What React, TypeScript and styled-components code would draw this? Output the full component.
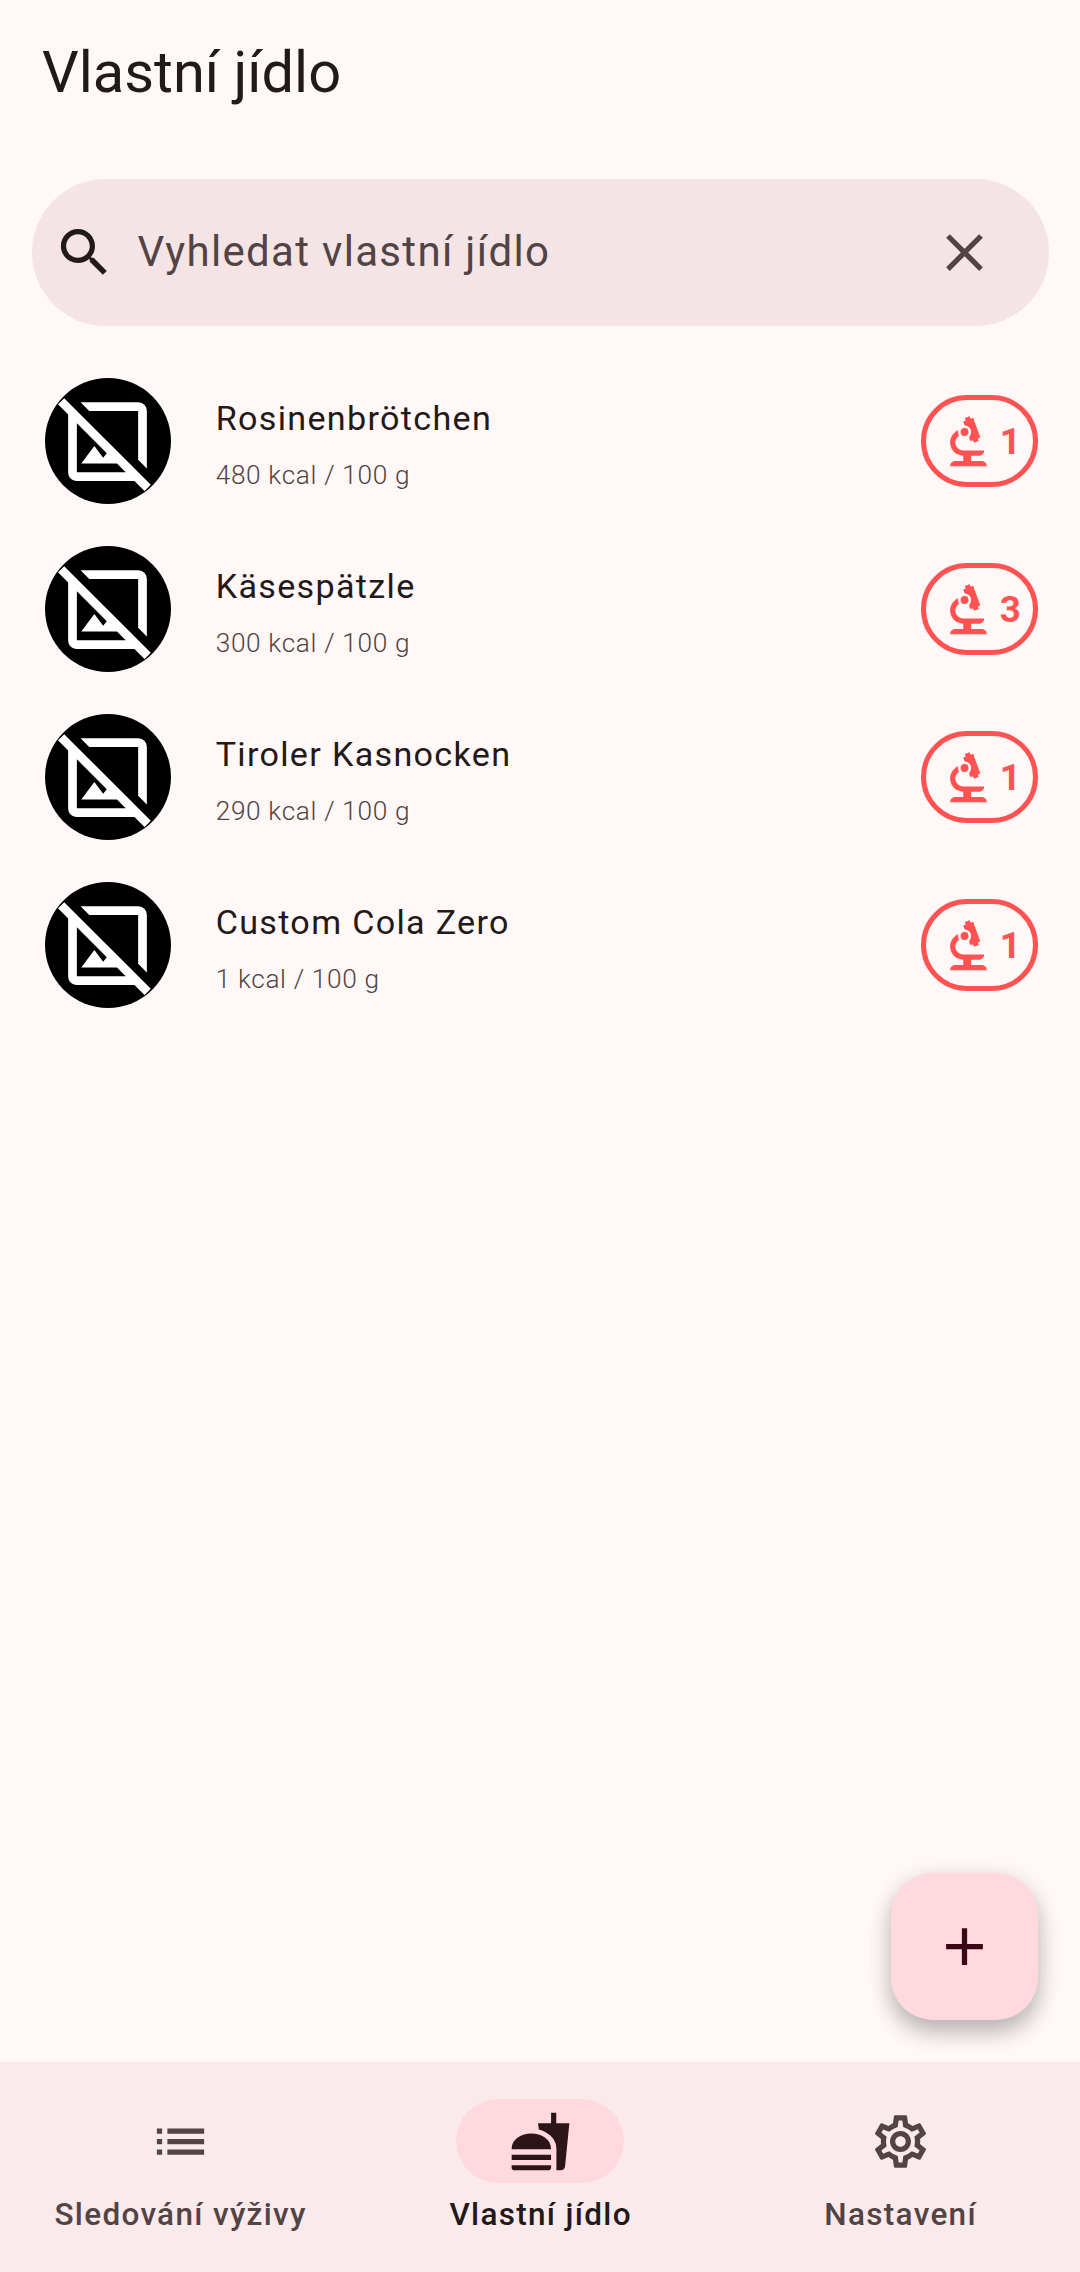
import React from "react";
import styled, { createGlobalStyle } from "styled-components";
import { MdOutlineSettings } from "react-icons/md";

const GlobalStyle = createGlobalStyle`
  body {
    margin: 0;
    background: #fff8f7;
    font-family: Roboto, "Liberation Sans", sans-serif;
  }
`;

const Screen = styled.div`
  display: flex;
  flex-direction: column;
  width: 1080px;
  height: 2272px;
  overflow: hidden;
  background: #fff8f7;
  color: #22191a;
`;

const AppBar = styled.header`
  display: flex;
  align-items: center;
  height: 147px;
  padding: 0 42px 1.5px;
  box-sizing: border-box;
`;

const Title = styled.h1`
  margin: 0;
  font-size: 57.75px;
  line-height: 73.5px;
  font-weight: 400;
`;

const Main = styled.main`
  display: flex;
  flex-direction: column;
  flex: 1;
  padding-top: 32px;
`;

const SearchBar = styled.div`
  display: flex;
  align-items: center;
  height: 147px;
  margin: 0 31.5px;
  padding: 0 52.5px 0 21px;
  box-sizing: border-box;
  border-radius: 73.5px;
  background: #f4e4e5;
`;

const SearchText = styled.span`
  flex: 1;
  padding: 0 0 2px 22px;
  font-size: 42px;
  line-height: 63px;
  letter-spacing: 1.3125px;
  color: #524344;
`;

const Icon = styled.svg<{ $size?: number; $color?: string }>`
  display: block;
  flex: none;
  width: ${(p) => p.$size ?? 63}px;
  height: ${(p) => p.$size ?? 63}px;
  fill: ${(p) => p.$color ?? "currentColor"};
`;

const SettingsIcon = styled(MdOutlineSettings)`
  display: block;
  flex: none;
  width: 63px;
  height: 63px;
`;

const FoodList = styled.ul`
  list-style: none;
  margin: 31px 0 0;
  padding: 0;
`;

const FoodRow = styled.li`
  display: flex;
  align-items: center;
  height: 168px;
  padding: 0 42px 0 44.6px;
`;

const Avatar = styled.div`
  display: flex;
  align-items: center;
  justify-content: center;
  flex: none;
  width: 126px;
  height: 126px;
  overflow: hidden;
  border-radius: 50%;
  background: #000;
`;

const FoodInfo = styled.div`
  flex: 1;
  padding: 7px 0 0 45.1px;
`;

const FoodName = styled.div`
  font-size: 34.125px;
  line-height: 52px;
  letter-spacing: 1.3125px;
`;

const FoodEnergy = styled.div`
  margin-top: 8.8px;
  font-size: 26.25px;
  font-weight: 300;
  line-height: 44px;
  letter-spacing: 0.65px;
  color: #524344;
`;

const Badge = styled.div`
  display: flex;
  align-items: center;
  width: 117px;
  height: 92px;
  padding: 2px 0 0 10.75px;
  box-sizing: border-box;
  border: 5.25px solid #ff5252;
  border-radius: 46px;
  color: #ff5252;
`;

const BadgeCount = styled.span`
  padding: 0 0 1px;
  font-size: 36.75px;
  font-weight: 700;
  line-height: 48px;
`;

const FabArea = styled.div`
  display: flex;
  justify-content: flex-end;
  margin-top: auto;
  padding: 0 42px 42px 0;
`;

const Fab = styled.button`
  display: flex;
  align-items: center;
  justify-content: center;
  width: 147px;
  height: 147px;
  padding: 0;
  border: 0;
  border-radius: 42px;
  background: #ffd9de;
  color: #3b0716;
  box-shadow: 0 13px 22px rgba(0, 0, 0, 0.24), 0 2px 26px rgba(0, 0, 0, 0.08);
`;

const NavBar = styled.nav`
  display: grid;
  grid-template-columns: repeat(3, 1fr);
  height: 210px;
  background: #faeaeb;
`;

const NavItem = styled.div<{ $active?: boolean }>`
  display: flex;
  flex-direction: column;
  align-items: center;
  padding-top: 37px;
  color: ${(p) => (p.$active ? "#22191a" : "#524344")};
`;

const Indicator = styled.div<{ $active?: boolean }>`
  display: flex;
  align-items: center;
  justify-content: center;
  width: 168px;
  height: 84px;
  border-radius: 42px;
  background: ${(p) => (p.$active ? "#ffd9de" : "transparent")};
  color: ${(p) => (p.$active ? "#2c1519" : "#524344")};
`;

const NavLabel = styled.span`
  margin-top: 10.5px;
  padding-left: 1.3px;
  font-size: 31.5px;
  font-weight: 500;
  line-height: 42px;
  letter-spacing: 1.3125px;
  white-space: nowrap;
`;

const SEARCH =
  "M15.5 14h-.79l-.28-.27C15.41 12.59 16 11.11 16 9.5 16 5.91 13.09 3 9.5 3S3 5.91 3 9.5 5.91 16 9.5 16c1.61 0 3.09-.59 4.23-1.57l.27.28v.79l5 4.99L20.49 19l-4.99-5zm-6 0C7.01 14 5 11.99 5 9.5S7.01 5 9.5 5 14 7.01 14 9.5 11.99 14 9.5 14z";
const CLOSE =
  "M19 6.41L17.59 5 12 10.59 6.41 5 5 6.41 10.59 12 5 17.59 6.41 19 12 13.41 17.59 19 19 17.59 13.41 12z";
const NO_IMAGE =
  "M19 5v11.17l2 2V5c0-1.1-.9-2-2-2H5.83l2 2H19zM2.1 2.1L.69 3.51 3 5.83V19c0 1.1.9 2 2 2h13.17l2.31 2.31 1.42-1.41L2.1 2.1zM5 19V7.83l6.84 6.84-.84 1.05L9 13l-3 4h8.17l2 2H5z";
const MICROSCOPE =
  "M7 19c-1.1 0-2 .9-2 2h14c0-1.1-.9-2-2-2h-4v-2h3c1.1 0 2-.9 2-2h-8c-1.66 0-3-1.34-3-3 0-1.09.59-2.04 1.46-2.56C8.17 9.03 8 8.54 8 8c0-.21.04-.42.09-.62C6.28 8.13 5 9.92 5 12c0 2.76 2.24 5 5 5v2H7zM10.56 5.51C11.91 5.54 13 6.64 13 8c0 .75-.33 1.41-.85 1.87l.59 1.62.94-.34.34.94 1.88-.68-.34-.94.94-.34-2.74-7.52-.94.34-.34-.94-1.88.68.34.94-.94.35.56 1.52z";
const PLUS = "M19 13h-6v6h-2v-6H5v-2h6V5h2v6h6v2z";
const LIST =
  "M3 13h2v-2H3v2zm0 4h2v-2H3v2zm0-8h2V7H3v2zm4 4h14v-2H7v2zm0 4h14v-2H7v2zM7 7v2h14V7H7z";
const FASTFOOD =
  "M18.06 22.99h1.66c.84 0 1.53-.64 1.63-1.46L23 5.05h-5V1h-1.97v4.05h-4.97l.3 2.34c1.71.47 3.31 1.32 4.27 2.26 1.44 1.42 2.43 2.89 2.43 5.29v8.05zM1 21.99V21h15.03v.99c0 .55-.45 1-1.01 1H2.01c-.56 0-1.01-.45-1.01-1zm15.03-7c0-8-15.03-8-15.03 0h15.03zM1.02 17h15v2h-15z";

const foods = [
  { name: "Rosinenbrötchen", energy: "480 kcal / 100 g", count: 1 },
  { name: "Käsespätzle", energy: "300 kcal / 100 g", count: 3 },
  { name: "Tiroler Kasnocken", energy: "290 kcal / 100 g", count: 1 },
  { name: "Custom Cola Zero", energy: "1 kcal / 100 g", count: 1 },
];

export default function App() {
  return (
    <>
      <GlobalStyle />
      <Screen>
        <AppBar>
          <Title>Vlastní jídlo</Title>
        </AppBar>
        <Main>
          <SearchBar>
            <Icon viewBox="0 0 24 24" $color="#22191a">
              <path d={SEARCH} />
            </Icon>
            <SearchText>Vyhledat vlastní jídlo</SearchText>
            <Icon viewBox="0 0 24 24" $color="#524344">
              <path d={CLOSE} />
            </Icon>
          </SearchBar>
          <FoodList>
            {foods.map((food) => (
              <FoodRow key={food.name}>
                <Avatar>
                  <Icon viewBox="0 0 24 24" $size={105} $color="#fff">
                    <path d={NO_IMAGE} />
                  </Icon>
                </Avatar>
                <FoodInfo>
                  <FoodName>{food.name}</FoodName>
                  <FoodEnergy>{food.energy}</FoodEnergy>
                </FoodInfo>
                <Badge>
                  <Icon viewBox="0 0 24 24">
                    <path d={MICROSCOPE} />
                    <circle cx="10.5" cy="8" r="1.5" />
                  </Icon>
                  <BadgeCount>{food.count}</BadgeCount>
                </Badge>
              </FoodRow>
            ))}
          </FoodList>
          <FabArea>
            <Fab>
              <Icon viewBox="0 0 24 24">
                <path d={PLUS} />
              </Icon>
            </Fab>
          </FabArea>
        </Main>
        <NavBar>
          <NavItem>
            <Indicator>
              <Icon viewBox="0 0 24 24">
                <path d={LIST} />
              </Icon>
            </Indicator>
            <NavLabel>Sledování výživy</NavLabel>
          </NavItem>
          <NavItem $active>
            <Indicator $active>
              <Icon viewBox="0 0 24 24">
                <path d={FASTFOOD} />
              </Icon>
            </Indicator>
            <NavLabel>Vlastní jídlo</NavLabel>
          </NavItem>
          <NavItem>
            <Indicator>
              <SettingsIcon />
            </Indicator>
            <NavLabel>Nastavení</NavLabel>
          </NavItem>
        </NavBar>
      </Screen>
    </>
  );
}
